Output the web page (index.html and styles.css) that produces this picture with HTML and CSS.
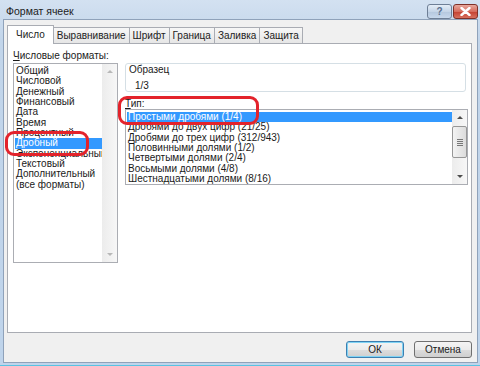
FILE: index.html
```html
<!DOCTYPE html>
<html lang="ru">
<head>
    <meta charset="UTF-8">
    <title>Формат ячеек</title>
    <link rel="stylesheet" href="styles.css">
</head>
<body>
    <div class="window">
        <div class="titlebar">
            <span class="title">Формат ячеек</span>
            <div class="caption-buttons">
                <span class="cap-btn help">?</span>
                <span class="cap-btn close">
                    <svg width="11" height="9" viewBox="0 0 11 9"><path d="M1.5 1 L9.5 8 M9.5 1 L1.5 8" stroke="#fff" stroke-width="2.4" stroke-linecap="round"/></svg>
                </span>
            </div>
        </div>
        <div class="client">
            <div class="tabs">
                <span class="tab active">Число</span>
                <span class="tab">Выравнивание</span>
                <span class="tab">Шрифт</span>
                <span class="tab">Граница</span>
                <span class="tab">Заливка</span>
                <span class="tab">Защита</span>
            </div>
            <div class="panel">
                <div class="col-left">
                    <div class="lbl"><u>Ч</u>исловые форматы:</div>
                    <div class="listbox formats">
                        <ul class="items">
                            <li>Общий</li>
                            <li>Числовой</li>
                            <li>Денежный</li>
                            <li>Финансовый</li>
                            <li>Дата</li>
                            <li>Время</li>
                            <li>Процентный</li>
                            <li class="selected">Дробный</li>
                            <li>Экспоненциальный</li>
                            <li>Текстовый</li>
                            <li>Дополнительный</li>
                            <li>(все форматы)</li>
                        </ul>
                        <div class="scrollbar">
                            <span class="arrow up disabled"></span>
                            <span class="track"></span>
                            <span class="arrow down disabled"></span>
                        </div>
                    </div>
                </div>
                <div class="col-right">
                    <div class="sample">
                        <div class="sample-title">Образец</div>
                        <div class="sample-value">1/3</div>
                    </div>
                    <div class="lbl type-lbl"><u>Т</u>ип:</div>
                    <div class="listbox types">
                        <ul class="items">
                            <li class="selected">Простыми дробями (1/4)</li>
                            <li>Дробями до двух цифр (21/25)</li>
                            <li>Дробями до трех цифр (312/943)</li>
                            <li>Половинными долями (1/2)</li>
                            <li>Четвертыми долями (2/4)</li>
                            <li>Восьмыми долями (4/8)</li>
                            <li>Шестнадцатыми долями (8/16)</li>
                        </ul>
                        <div class="scrollbar">
                            <span class="arrow up"></span>
                            <span class="track"><span class="thumb"><i></i><i></i><i></i><i></i></span></span>
                            <span class="arrow down"></span>
                        </div>
                    </div>
                </div>
                <div class="marker marker-left"></div>
                <div class="marker marker-right"></div>
            </div>
            <div class="buttons">
                <button class="btn default">ОК</button>
                <button class="btn">Отмена</button>
            </div>
        </div>
    </div>
</body>
</html>
```

FILE: styles.css
```css
body {
    margin: 0;
    font-family: "Liberation Sans", Arial, sans-serif;
    font-size: 10px;
    color: #1a1a1a;
    background: #fff;
    overflow: hidden;
}
.window {
    width: 480px;
    height: 366px;
    box-sizing: border-box;
    display: flex;
    flex-direction: column;
    padding: 0 2px 2px 3px;
    background: linear-gradient(to bottom, #d3e1f1, #c2d5ea 40px, #bfd4eb);
    border-bottom: 1px solid #57c3e3;
}
.titlebar {
    height: 19px;
    display: flex;
    align-items: center;
    justify-content: space-between;
    padding-left: 3px;
}
.title {
    font-size: 10.5px;
    color: #1c1c1c;
    margin-top: 2px;
}
.caption-buttons {
    display: flex;
    gap: 1px;
    align-self: flex-start;
    margin-top: 4px;
}
.cap-btn {
    height: 13px;
    border: 1px solid #6e7f96;
    border-radius: 3px;
    display: flex;
    align-items: center;
    justify-content: center;
}
.help {
    width: 23px;
    background: linear-gradient(to bottom, #e4edf7, #c5d5e8 50%, #b4c7de 51%, #c7d8ec);
    color: #5a6f8c;
    font-size: 10px;
    font-weight: bold;
}
.close {
    width: 23px;
    border-color: #7e3128;
    background: linear-gradient(to bottom, #e8a89d, #d66c5d 50%, #c4402f 51%, #d7705e);
}
.client {
    flex: 1;
    background: #f0f0f0;
    border: 1px solid #8fa2ba;
    padding: 5px 5px 0 3px;
    display: flex;
    flex-direction: column;
}
.tabs {
    display: flex;
    align-items: flex-end;
    height: 18px;
}
.tab {
    height: 15px;
    line-height: 15px;
    padding: 0 3px;
    border: 1px solid #a9acb3;
    border-bottom: none;
    margin-right: -1px;
    background: linear-gradient(to bottom, #f7f7f7, #e6e6e6);
    color: #222;
}
.tab.active {
    height: 18px;
    line-height: 18px;
    padding: 0 8px;
    background: #fff;
    margin-bottom: -1px;
    position: relative;
    z-index: 1;
}
.panel {
    position: relative;
    height: 290px;
    box-sizing: border-box;
    background: #fff;
    border: 1px solid #a9acb3;
    display: grid;
    grid-template-columns: 105px 1fr;
    column-gap: 7px;
    padding: 6px 3px 0 5px;
    align-items: start;
}
.lbl {
    height: 12px;
    line-height: 11px;
    margin-bottom: 1px;
}
.lbl u {
    text-decoration-thickness: 1px;
}
.listbox {
    display: flex;
    border: 1px solid #abadb3;
    background: #fff;
    box-sizing: border-box;
}
.formats {
    height: 200px;
}
.types {
    height: 76px;
}
.items {
    list-style: none;
    margin: 0;
    padding: 2px 0 0 1px;
    flex: 1;
    overflow: hidden;
}
.items li {
    height: 10.35px;
    line-height: 10.35px;
    padding-left: 1px;
    white-space: nowrap;
}
.items li.selected {
    background: #3399ff;
    color: #fff;
}
.scrollbar {
    width: 15px;
    display: flex;
    flex-direction: column;
    background: linear-gradient(to right, #ececec, #f7f7f7);
}
.arrow {
    height: 15px;
    display: flex;
    align-items: center;
    justify-content: center;
}
.arrow::after {
    content: "";
    border-left: 3px solid transparent;
    border-right: 3px solid transparent;
}
.arrow.up::after {
    border-bottom: 3px solid #4d4d4d;
}
.arrow.down::after {
    border-top: 3px solid #4d4d4d;
}
.arrow.disabled.up::after {
    border-bottom-color: #b8b8b8;
}
.arrow.disabled.down::after {
    border-top-color: #b8b8b8;
}
.track {
    flex: 1;
}
.thumb {
    display: flex;
    flex-direction: column;
    align-items: center;
    justify-content: center;
    gap: 1px;
    height: 32px;
    margin: 1px 0 0 0;
    border: 1px solid #979797;
    border-radius: 2px;
    background: linear-gradient(to right, #f3f3f3, #dcdcdc);
    box-sizing: border-box;
}
.thumb i {
    width: 6px;
    height: 1px;
    background: #777;
}
.col-right {
    padding-top: 13px;
}
.sample {
    height: 29px;
    box-sizing: border-box;
    margin-right: 2px;
    border: 1px solid #d5dfe5;
    border-radius: 3px;
    padding: 1px 0 0 3px;
}
.sample-title {
    line-height: 10px;
}
.sample-value {
    padding: 6px 0 0 6px;
    line-height: 10px;
}
.type-lbl {
    margin: 6px 0 0;
    height: 11px;
}
.marker {
    position: absolute;
    border: 3px solid #e3232b;
    border-radius: 9px;
    box-sizing: border-box;
}
.marker-left {
    left: -3px;
    top: 87px;
    width: 84px;
    height: 25px;
}
.marker-right {
    left: 110px;
    top: 52px;
    width: 141px;
    height: 29px;
}
.buttons {
    display: flex;
    justify-content: flex-end;
    gap: 10px;
    padding: 8px 0 0;
}
.btn {
    width: 58px;
    height: 17px;
    padding: 0;
    font-family: "Liberation Sans", Arial, sans-serif;
    font-size: 10px;
    color: #1a1a1a;
    border: 1px solid #707070;
    border-radius: 3px;
    background: linear-gradient(to bottom, #f4f4f4, #ebebeb 50%, #dddddd 51%, #cfcfcf);
}
.btn.default {
    border-color: #3c7fb1;
    box-shadow: inset 0 0 0 1px #7fd3f4;
}
```
